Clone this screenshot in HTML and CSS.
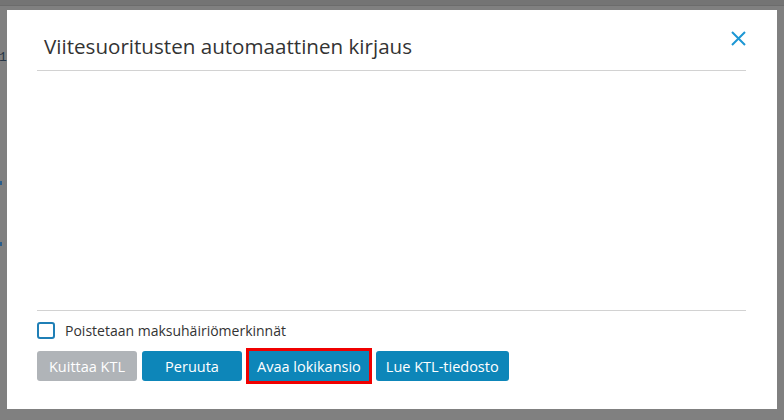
FILE: index.html
```html
<!DOCTYPE html>
<html lang="fi">
<head>
  <meta charset="UTF-8" />
  <title>Viitesuoritusten automaattinen kirjaus</title>
  <link rel="stylesheet" href="styles.css">
</head>
<body>
  <div class="topstrip"></div>
  <div class="stage">
    <div class="gutter">
      <span class="gutter-num">1</span>
      <span class="gutter-dot dot-a"></span>
      <span class="gutter-dot dot-b"></span>
    </div>

    <div class="dialog">
      <div class="dialog-header">
        <h2 class="dialog-title">Viitesuoritusten automaattinen kirjaus</h2>
        <button class="close-btn" aria-label="Sulje">
          <svg width="15" height="15" viewBox="0 0 15 15">
            <path d="M1 1 L14 14 M14 1 L1 14" stroke="#1d97d4" stroke-width="2" fill="none"/>
          </svg>
        </button>
      </div>

      <div class="dialog-body"></div>

      <div class="dialog-footer">
        <label class="check-row">
          <span class="checkbox"></span>
          Poistetaan maksuhäiriömerkinnät
        </label>
        <div class="btn-row">
          <button class="btn btn-disabled">Kuittaa KTL</button>
          <button class="btn">Peruuta</button>
          <span class="highlight"><button class="btn">Avaa lokikansio</button></span>
          <button class="btn">Lue KTL-tiedosto</button>
        </div>
      </div>
    </div>
  </div>
</body>
</html>
```

FILE: styles.css
```css
* {
  box-sizing: border-box;
  margin: 0;
  padding: 0;
}

body {
  background-color: #808080;
  font-family: 'Open Sans', 'Noto Sans', sans-serif;
  color: #333;
  width: 784px;
  height: 420px;
  overflow: hidden;
}

.topstrip {
  height: 6px;
  background: #747474;
  border-bottom: 1px solid #6c6c6c;
}

.stage {
  display: flex;
  padding-top: 4px;
}

.gutter {
  width: 7px;
  height: 399px;
  overflow: hidden;
  display: flex;
  flex-direction: column;
}

.gutter-num {
  font-family: 'Liberation Mono', monospace;
  font-size: 13px;
  color: #263646;
  margin-top: 40px;
  margin-left: -1px;
  line-height: 15px;
}

.gutter-dot {
  width: 2px;
  height: 4px;
  background: #2a5e8c;
}

.dot-a {
  margin-top: 116px;
}

.dot-b {
  margin-top: 57px;
}

.dialog {
  width: 770px;
  height: 399px;
  background: #fff;
  padding: 0 31px 0 30px;
  display: flex;
  flex-direction: column;
}

.dialog-header {
  height: 61px;
  border-bottom: 1px solid #d2d2d2;
  display: flex;
  align-items: flex-start;
  justify-content: space-between;
  padding-top: 22px;
}

.dialog-title {
  font-size: 20.6px;
  font-weight: 400;
  margin-left: 7px;
  line-height: 29px;
  color: #333;
}

.close-btn {
  background: none;
  border: none;
  margin-top: -1px;
  cursor: pointer;
  display: flex;
}

.dialog-body {
  height: 240px;
  border-bottom: 1px solid #d2d2d2;
}

.dialog-footer {
  padding-top: 10px;
}

.check-row {
  display: flex;
  align-items: center;
  gap: 10px;
  font-size: 14px;
  color: #333;
  height: 18px;
}

.checkbox {
  width: 18px;
  height: 17px;
  border: 2px solid #1f7fb6;
  border-radius: 3px;
}

.btn-row {
  display: flex;
  align-items: center;
  gap: 4px;
  margin-top: 9px;
}

.btn {
  min-width: 100px;
  height: 30px;
  padding: 0 10px;
  background: #0d86b9;
  color: #fff;
  border: none;
  border-radius: 3px;
  font-family: 'Open Sans', 'Noto Sans', sans-serif;
  font-size: 14.5px;
  white-space: nowrap;
  cursor: pointer;
}

.btn-disabled {
  background: #b0b4b8;
  margin-right: 1px;
  cursor: default;
}

.highlight {
  display: flex;
  border: 3px solid #f00000;
}

.highlight .btn {
  border-radius: 0;
  padding: 0 8px;
}
```
